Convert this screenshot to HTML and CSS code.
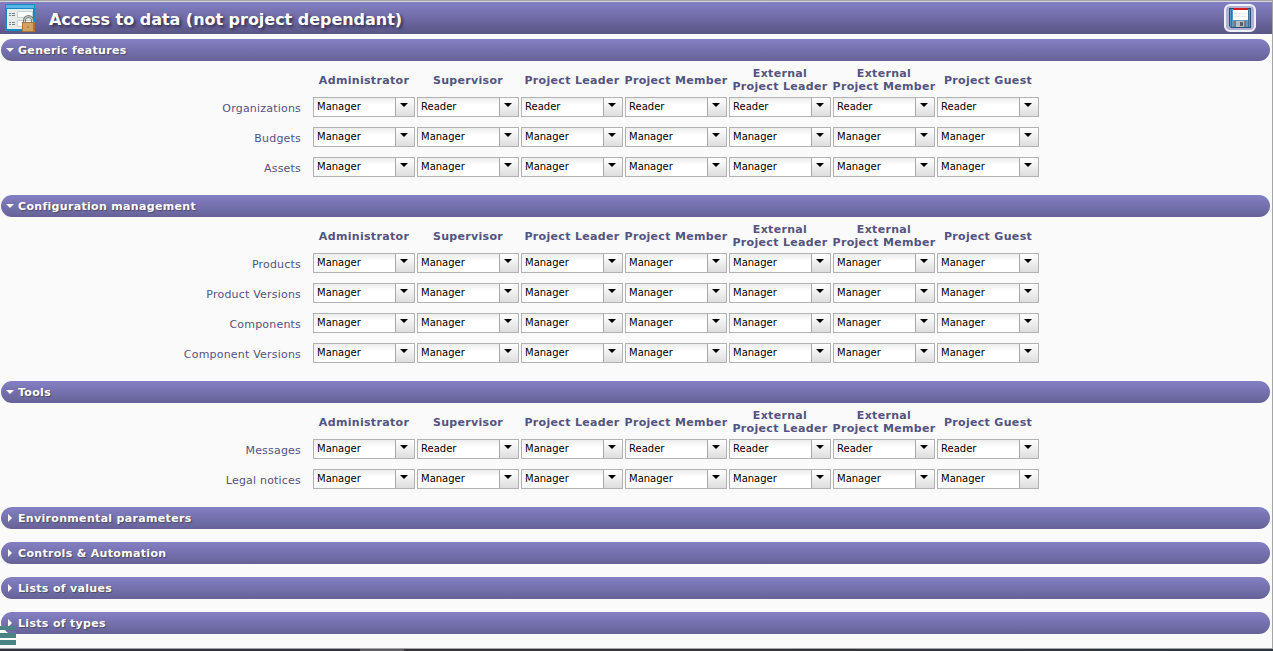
FILE: index.html
```
<!DOCTYPE html>
<html lang="en">
<head>
<meta charset="utf-8">
<title>Access to data</title>
<link rel="stylesheet" href="styles.css">
</head>
<body>
<div class="page">
<header class="titlebar">
<svg class="page-icon" width="32" height="32" viewBox="0 0 32 32" aria-hidden="true">
<path fill="#168ac4" d="M0 0h30v27H0z"/><path fill="#55b5e5" d="M1 1h28v3H1z"/><path fill="#e6ecec" d="M2 5h26v20H2z"/>
<path fill="#fff" stroke="#c8d0d2" d="M12.500 7.500h15v6h-15zM12.500 16.500h15v6h-15z"/>
<path stroke="#7b8489" d="M4 9.500h2M7 9.500h3M4 11.500h2M7 11.500h3M4 18.500h2M7 18.500h3M4 20.500h2M7 20.500h3"/>
<path fill="none" stroke="#777b7a" stroke-width="3" d="M19.500 20v-3.500a4 4 0 0 1 8 0V20"/><path fill="none" stroke="#d5d8d4" d="M19.500 20v-3.500a4 4 0 0 1 8 0V20"/>
<path fill="#a8753b" d="M17 18h13v10H17z"/><path fill="#d2a263" d="M18 19h10v8H18z"/><path fill="#b58a50" d="M22 22h2v2h-2z"/>
</svg>
<h1>Access to data (not project dependant)</h1>
<button class="save" aria-label="Save"><svg width="24" height="24" viewBox="0 0 24 24">
<path fill="#254f75" d="M1 2h22v20H3l-2-2z"/><path fill="#5b98c4" d="M2 3h20v18H3l-1-1z"/><path fill="#397099" d="M3 3h1v18H3zM20 3h1v18h-1z"/>
<path fill="#fff" d="M5 2h15v12H5z"/><path fill="#d51f25" d="M5 2h15v2H5z"/><path fill="#e6eaed" d="M6 7h13v1H6zM6 10h13v1H6z"/>
<path fill="#747b80" d="M6 15h12v6H6z"/><path fill="#b8bdc0" d="M8 15h8v6H8z"/><path fill="#596068" d="M12 16h3v4h-3z"/>
</svg></button>
</header>
<main>
<section><h2 class="bar open">Generic features</h2>
<div class="grid">
<div class="row head"><span></span><b>Administrator</b><b>Supervisor</b><b>Project Leader</b><b>Project Member</b><b>External<br>Project Leader</b><b>External<br>Project Member</b><b>Project Guest</b></div>
<div class="row"><label>Organizations</label><div class="select">Manager</div><div class="select">Reader</div><div class="select">Reader</div><div class="select">Reader</div><div class="select">Reader</div><div class="select">Reader</div><div class="select">Reader</div></div>
<div class="row"><label>Budgets</label><div class="select">Manager</div><div class="select">Manager</div><div class="select">Manager</div><div class="select">Manager</div><div class="select">Manager</div><div class="select">Manager</div><div class="select">Manager</div></div>
<div class="row"><label>Assets</label><div class="select">Manager</div><div class="select">Manager</div><div class="select">Manager</div><div class="select">Manager</div><div class="select">Manager</div><div class="select">Manager</div><div class="select">Manager</div></div>
</div></section>
<section><h2 class="bar open">Configuration management</h2>
<div class="grid">
<div class="row head"><span></span><b>Administrator</b><b>Supervisor</b><b>Project Leader</b><b>Project Member</b><b>External<br>Project Leader</b><b>External<br>Project Member</b><b>Project Guest</b></div>
<div class="row"><label>Products</label><div class="select">Manager</div><div class="select">Manager</div><div class="select">Manager</div><div class="select">Manager</div><div class="select">Manager</div><div class="select">Manager</div><div class="select">Manager</div></div>
<div class="row"><label>Product Versions</label><div class="select">Manager</div><div class="select">Manager</div><div class="select">Manager</div><div class="select">Manager</div><div class="select">Manager</div><div class="select">Manager</div><div class="select">Manager</div></div>
<div class="row"><label>Components</label><div class="select">Manager</div><div class="select">Manager</div><div class="select">Manager</div><div class="select">Manager</div><div class="select">Manager</div><div class="select">Manager</div><div class="select">Manager</div></div>
<div class="row"><label>Component Versions</label><div class="select">Manager</div><div class="select">Manager</div><div class="select">Manager</div><div class="select">Manager</div><div class="select">Manager</div><div class="select">Manager</div><div class="select">Manager</div></div>
</div></section>
<section><h2 class="bar open">Tools</h2>
<div class="grid">
<div class="row head"><span></span><b>Administrator</b><b>Supervisor</b><b>Project Leader</b><b>Project Member</b><b>External<br>Project Leader</b><b>External<br>Project Member</b><b>Project Guest</b></div>
<div class="row"><label>Messages</label><div class="select">Manager</div><div class="select">Reader</div><div class="select">Manager</div><div class="select">Reader</div><div class="select">Reader</div><div class="select">Reader</div><div class="select">Reader</div></div>
<div class="row"><label>Legal notices</label><div class="select">Manager</div><div class="select">Manager</div><div class="select">Manager</div><div class="select">Manager</div><div class="select">Manager</div><div class="select">Manager</div><div class="select">Manager</div></div>
</div></section>
<section><h2 class="bar">Environmental parameters</h2></section>
<section><h2 class="bar">Controls &amp; Automation</h2></section>
<section><h2 class="bar">Lists of values</h2></section>
<section><h2 class="bar">Lists of types</h2></section>
</main>
<svg class="menu-tab" width="16" height="20" viewBox="0 0 16 20" aria-hidden="true"><path fill="#fff" d="M0 4h5l2 2h9v13H0z"/><path fill="#4b8286" d="M0 0h16v4H0zM0 7h16v5H0zM0 14h16v5H0z"/><path fill="#716ca9" d="M6 5h10v2H8z"/></svg>
<footer class="edge"></footer>
</div>
</body>
</html>
```
FILE: styles.css
```
* { box-sizing: border-box; }
body { margin: 0; background: #fafafa; font: 11px/13px Verdana, "DejaVu Sans", sans-serif; color: #545381; overflow: hidden; }
.page { position: relative; display: flex; flex-direction: column; height: 651px; border-top: 1px solid #a5a5a5; border-right: 1px solid #a5a5a5; }
.titlebar { display: flex; align-items: center; height: 33px; margin-bottom: 5px; padding: 0 16px 0 5px; border-top: 1px solid #d6d5de; background: linear-gradient(#8480c4, #5a5686); }
.page-icon { flex: none; margin-top: 4px; }
h1 { margin: 3px 0 0 12px; color: #fff; font-size: 16px; line-height: 20px; text-shadow: 2px 2px 3px #33304f; white-space: nowrap; letter-spacing: -.03px; }
.save { display: flex; align-items: center; justify-content: center; width: 32px; height: 28px; margin: 0 0 1px auto; padding: 0; border: 2px solid #f1f1f8; border-radius: 6px; background: #b2b0d3; }
main { flex: 1; padding: 0 2px 0 1px; }
section { margin-bottom: 13px; }
.bar { display: flex; align-items: center; height: 22px; margin: 0; padding: 1px 0 0 17px; position: relative; border-radius: 11px; background: linear-gradient(#8480c4, #666297); color: #fff; font-size: 11px; line-height: 21px; letter-spacing: .32px; text-shadow: 1px 1px 1px #4d4a60; }
.bar::before { content: ""; position: absolute; left: 7px; top: 7px; width: 4px; height: 8px; background: #fff; clip-path: polygon(0 0, 100% 50%, 0 100%); }
.bar.open::before { left: 5px; top: 9px; width: 8px; height: 4px; clip-path: polygon(0 0, 100% 0, 50% 100%); }
.row { display: grid; grid-template-columns: 310px repeat(7, 102px); column-gap: 2px; align-items: center; height: 30px; }
.head { height: 31px; padding-top: 6px; }
.head b { justify-self: center; text-align: center; white-space: nowrap; letter-spacing: .32px; }
.row label { padding: 2px 10px 0 0; text-align: right; letter-spacing: .2px; }
.select { display: flex; align-items: center; position: relative; height: 20px; padding: 0 0 1px 3px; border: 1px solid #b3b3b3; background: linear-gradient(#ececec, #fff 7px); color: #000; font-size: 10px; }
.select::before { content: ""; position: absolute; right: 0; top: 0; width: 18.5px; height: 18px; border-left: 1px solid #a8a8a8; background: linear-gradient(#fff, #dedede); }
.select::after { content: ""; position: absolute; right: 6px; top: 5px; width: 8px; height: 4px; background: #000; clip-path: polygon(0 0, 100% 0, 50% 100%); }
.menu-tab { position: absolute; left: 0; top: 625px; }
.edge { height: 3px; margin-right: -1px; border-top: 1px solid #a5a5a5; background: linear-gradient(90deg, #30303b 0 360px, #5d5c61 360px 404px, #353339 404px 700px, #27333f); }
```
